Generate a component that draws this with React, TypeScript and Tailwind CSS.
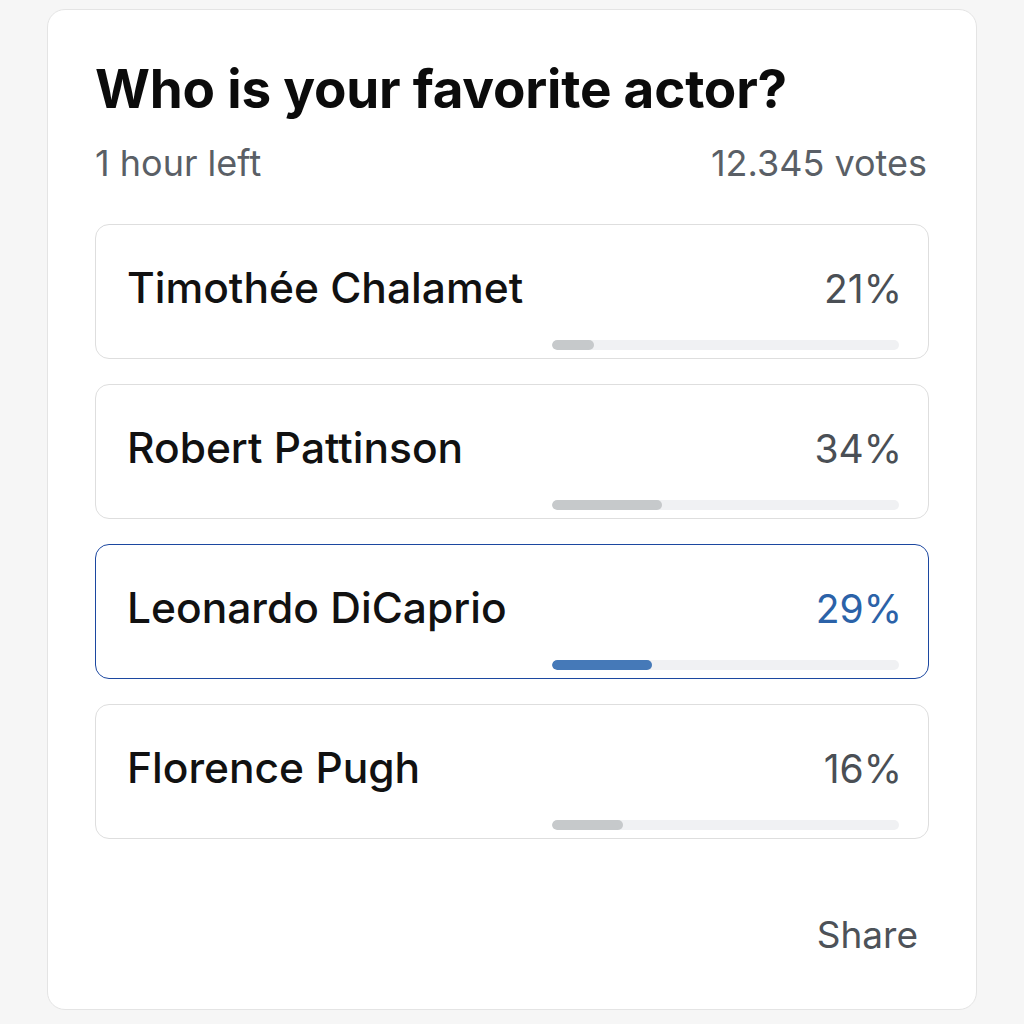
import React from 'react';

const options = [
  { name: 'Timothée Chalamet', pct: 21, bar: 42, selected: false },
  { name: 'Robert Pattinson', pct: 34, bar: 110, selected: false },
  { name: 'Leonardo DiCaprio', pct: 29, bar: 100, selected: true },
  { name: 'Florence Pugh', pct: 16, bar: 71, selected: false },
];

export default function App() {
  return (
    <div className="w-[1024px] h-[1024px] bg-[#f6f6f6] pt-[9px] pl-[47px] font-['Inter',sans-serif]">
      {/* Poll card */}
      <div className="w-[930px] h-[1001px] bg-white border border-[#e4e4e4] rounded-[18px] px-[47px] flex flex-col">
        <h1 className="mt-[47px] text-[53px] leading-[64px] font-bold text-[#0b0b0b] tracking-[-0.2px]">
          Who is your favorite actor?
        </h1>
        <div className="mt-[20px] flex justify-between text-[36px] leading-[44px] text-[#5a5f66]">
          <span>1 hour left</span>
          <span className="pr-[2px]">12.345 votes</span>
        </div>

        <div className="mt-[39px] flex flex-col gap-[25px]">
          {options.map((o) => (
            <div
              key={o.name}
              className={
                o.selected
                  ? 'h-[135px] rounded-[14px] border border-[#1c47a0] pl-[31px] pr-[29px] flex flex-col'
                  : 'h-[135px] rounded-[14px] border border-[#dedede] pl-[31px] pr-[29px] flex flex-col'
              }
            >
              <div className="mt-[37px] flex justify-between items-baseline leading-[52px]">
                <span className="text-[42.5px] font-medium text-[#111]">{o.name}</span>
                <span
                  className={
                    o.selected
                      ? 'mr-[-3px] text-[39px] text-[#2b62a8]'
                      : 'mr-[-3px] text-[39px] text-[#4a4f55]'
                  }
                >
                  {o.pct}%
                </span>
              </div>
              <div className="mt-[25px] ml-auto w-[347px] h-[10px] rounded-full bg-[#f0f1f3] overflow-hidden">
                <div
                  className={o.selected ? 'h-full rounded-full bg-[#4579b8]' : 'h-full rounded-full bg-[#c6c9cb]'}
                  style={{ width: o.bar }}
                />
              </div>
            </div>
          ))}
        </div>

        <div className="mt-[74px] flex justify-end pr-[11px]">
          <span className="text-[37px] leading-[44px] text-[#4d5258]">Share</span>
        </div>
      </div>
    </div>
  );
}
